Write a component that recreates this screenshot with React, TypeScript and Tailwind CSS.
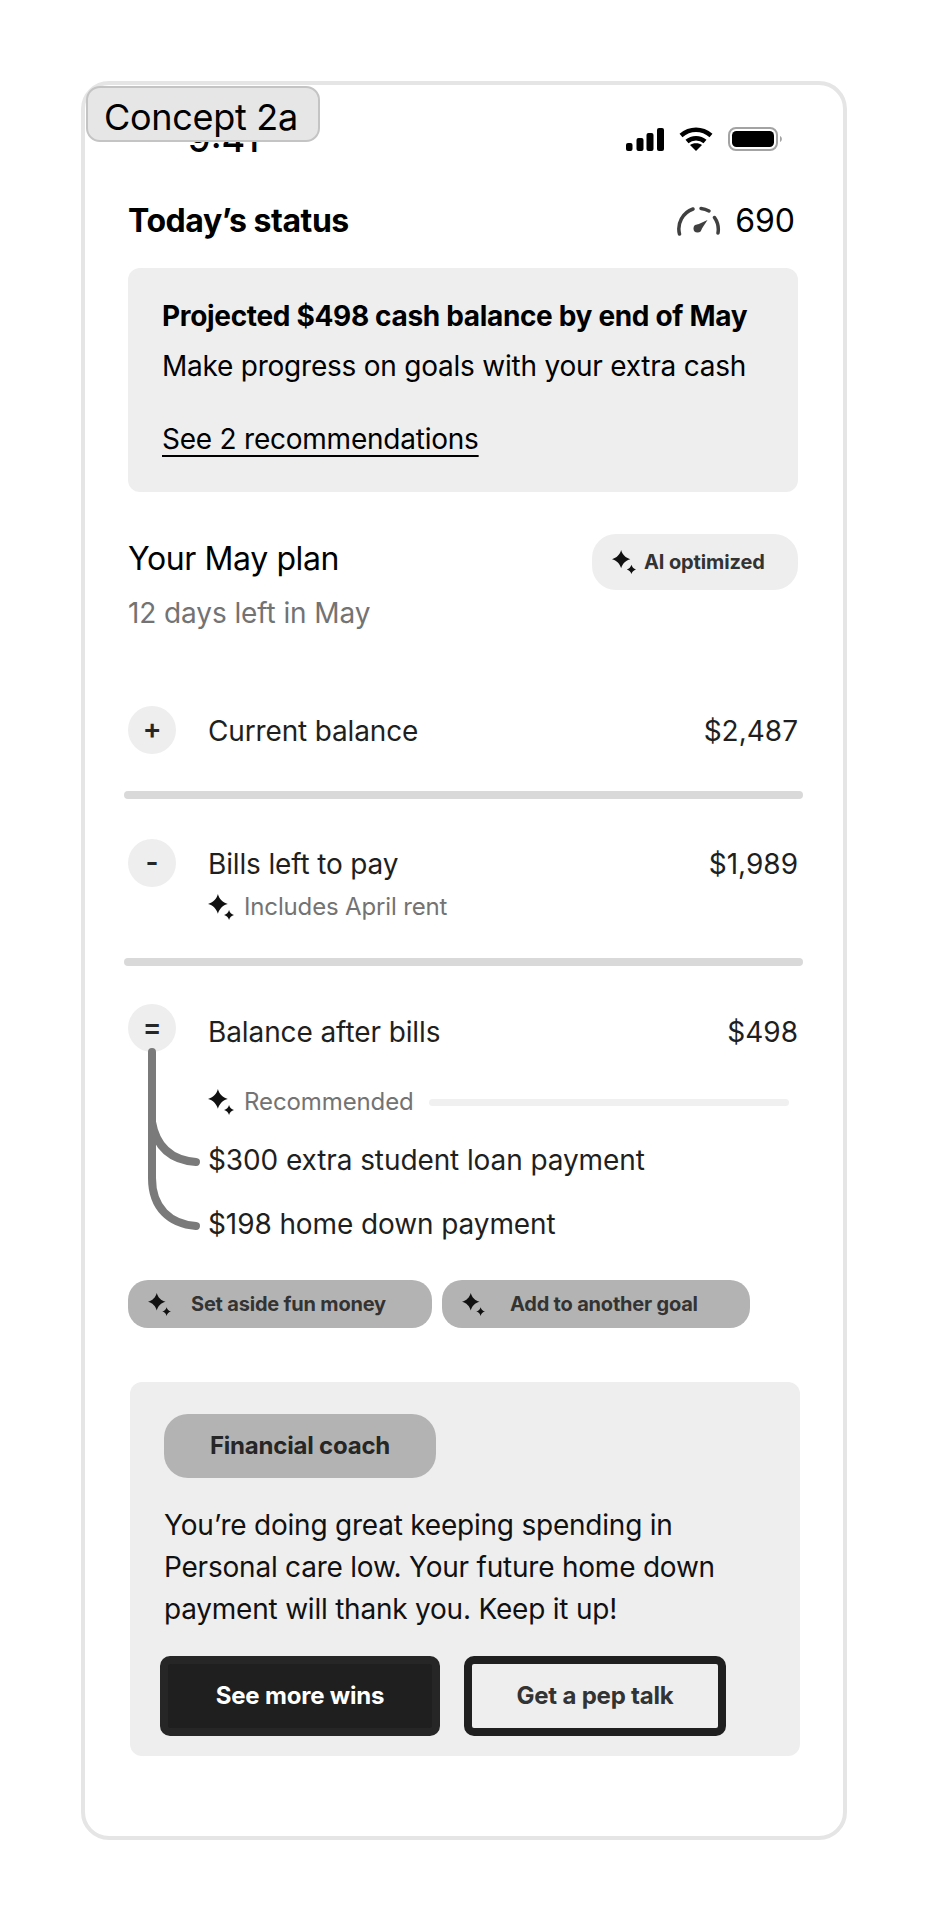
const Sparkle = ({ className }: { className: string }) => (
  <svg viewBox="0 0 21 21" className={className} fill="#111111">
    <path d="M8 0 C9 4 12 7 16 8 C12 9 9 12 8 16 C7 12 4 9 0 8 C4 7 7 4 8 0 Z" />
    <path d="M17 13 C17.5 15 19 16.5 21 17 C19 17.5 17.5 19 17 21 C16.5 19 15 17.5 13 17 C15 16.5 16.5 15 17 13 Z" />
  </svg>
);

const StatusIcons = () => (
  <div className="flex items-center gap-[15px]">
    <svg width="38" height="23" viewBox="0 0 38 23" fill="#000000">
      <rect x="0" y="15" width="6.5" height="8" rx="2" />
      <rect x="10.5" y="10" width="7" height="13" rx="2" />
      <rect x="20.5" y="5" width="7" height="18" rx="2" />
      <rect x="31" y="0" width="7" height="23" rx="2" />
    </svg>
    <svg width="34" height="24" viewBox="0 0 34 24" fill="none" stroke="#000000" strokeWidth="4.5">
      <path d="M2 8.5 C11 0.8 23 0.8 32 8.5" />
      <path d="M8 14.5 C13 10 21 10 26 14.5" />
      <path d="M17 24 L11 18 C14 15.5 20 15.5 23 18 Z" fill="#000000" stroke="none" />
    </svg>
    <svg width="55" height="24" viewBox="0 0 55 24">
      <rect x="1" y="1" width="48" height="22" rx="7" fill="none" stroke="#a3a3a3" strokeWidth="2" />
      <rect x="4" y="4" width="42" height="16" rx="4.5" fill="#000000" />
      <path d="M52 9 C54.5 10 54.5 14 52 15 Z" fill="#a3a3a3" />
    </svg>
  </div>
);

const Gauge = () => (
  <svg width="44" height="30" viewBox="12 10 44 30" fill="none" stroke="#404040" strokeWidth="3.5" strokeLinecap="round">
    <path d="M14.5 38 A 21 21 0 0 1 28 13" />
    <path d="M36 12.5 A 21 21 0 0 1 44 15" />
    <path d="M49.5 21.5 A 21 21 0 0 1 53 37" />
    <circle cx="32.5" cy="32.5" r="4" fill="#404040" stroke="none" />
    <path d="M29.5 30 L42.5 24 L35 35.5 Z" fill="#404040" stroke="none" />
  </svg>
);

const Circle = ({ sign }: { sign: string }) => (
  <div className="w-12 h-12 shrink-0 rounded-full bg-[#eeeeee] flex items-center justify-center pb-[2px] text-[28px] font-semibold text-[#262626]">
    {sign}
  </div>
);

const Divider = () => <div className="h-2 w-[679px] -ml-1 rounded-full bg-[#d9d9d9]" />;

const Chip = ({ label, width, gap }: { label: string; width: string; gap: string }) => (
  <div className={`h-12 ${width} ${gap} rounded-[20px] bg-[#b3b3b3] flex items-center pl-5 text-[20px] font-bold text-[#333333] tracking-[-0.2px]`}>
    <Sparkle className="w-[23px] h-[23px] shrink-0" />
    {label}
  </div>
);

export default function App() {
  return (
    <div className="bg-white min-h-[1920px] pt-[81px] pl-[81px] font-['Inter',sans-serif] text-[#1f1f1f]">
      <div className="relative w-[766px] h-[1759px] border-4 border-[#e5e5e5] rounded-[28px] pl-[43px] pr-[45px]">
        <div className="absolute left-[1px] top-[1px] w-[234px] h-[56px] z-10 rounded-[14px] bg-[#e6e6e6] border-2 border-[#c4c4c4] flex items-center pl-[16px] pt-[6px] text-[36px] tracking-[-0.3px] text-black">
          Concept 2a
        </div>

        {/* status bar */}
        <div className="h-[75px] flex justify-between items-start pr-[15px]">
          <div className="pt-[32px] pl-[60px] text-[36px] leading-[44px] font-medium text-black">9:41</div>
          <div className="pt-[42px]"><StatusIcons /></div>
        </div>

        <div className="mt-10 h-10 flex items-center justify-between">
          <div className="pt-[2px] text-[32px] font-bold text-black tracking-[-0.45px]">Today’s status</div>
          <div className="flex items-center gap-[14px] pt-[2px] pr-[3px] text-[32px] text-black">
            <Gauge />
            <span>690</span>
          </div>
        </div>

        <div className="mt-7 h-[224px] rounded-[12px] bg-[#eeeeee] pl-[34px] pt-7 text-[28px] text-black tracking-[-0.23px]">
          <div className="h-10 leading-10 font-bold tracking-[-0.33px]">Projected $498 cash balance by end of May</div>
          <div className="mt-[10px] h-10 leading-10">Make progress on goals with your extra cash</div>
          <div className="mt-[33px] h-10 leading-10 underline underline-offset-[6px]">See 2 recommendations</div>
        </div>

        <div className="mt-[42px] flex items-start justify-between">
          <div className="pt-[5px]">
            <div className="h-10 leading-10 text-[32px] text-black tracking-[-0.38px]">Your May plan</div>
            <div className="mt-[14px] h-10 leading-10 text-[28px] text-[#737373] tracking-[-0.1px]">12 days left in May</div>
          </div>
          <div className="w-[206px] h-14 rounded-[24px] bg-[#eeeeee] flex items-center gap-[8px] pl-[20px] text-[20px] font-bold text-[#333333] tracking-[-0.12px]">
            <Sparkle className="w-[24px] h-[24px] shrink-0" />
            AI optimized
          </div>
        </div>

        <div className="mt-[73px] flex items-center gap-8 text-[28px] tracking-[-0.15px]">
          <Circle sign="+" />
          <div className="flex-1 pt-[2px]">Current balance</div>
          <div className="pt-[2px] tracking-normal">$2,487</div>
        </div>

        <div className="mt-[37px]"><Divider /></div>

        <div className="mt-10 flex items-center gap-8 text-[28px] tracking-[-0.15px]">
          <Circle sign="-" />
          <div className="flex-1 pt-[2px]">Bills left to pay</div>
          <div className="pt-[2px] tracking-normal">$1,989</div>
        </div>
        <div className="mt-[5px] ml-20 h-[30px] flex items-center gap-[10px] text-[24px] text-[#737373] tracking-[-0.15px]">
          <Sparkle className="w-[26px] h-[26px]" />
          Includes April rent
        </div>

        <div className="mt-[36px]"><Divider /></div>

        <div className="relative mt-[38px]">
          <svg className="absolute left-[17px] top-[44px]" width="56" height="186" viewBox="0 0 56 186" fill="none" stroke="#7a7a7a" strokeWidth="8" strokeLinecap="round">
            <path d="M7 4 L7 130 C7 160 25 176 51 178" />
            <path d="M7 74 C11 98 25 112 51 114" />
          </svg>
          <div className="flex items-start gap-8 text-[28px] tracking-[-0.1px]">
            <Circle sign="=" />
            <div className="flex-1 mt-2 h-10 leading-10">Balance after bills</div>
            <div className="mt-2 h-10 leading-10 tracking-normal">$498</div>
          </div>
          <div className="mt-[35px] ml-20 h-[30px] flex items-center gap-[10px] text-[24px] text-[#737373] tracking-[-0.1px]">
            <Sparkle className="w-[26px] h-[26px]" />
            Recommended
            <div className="ml-[5px] w-[360px] h-[7px] rounded-full bg-[#f0f0f0]" />
          </div>
          <div className="mt-[23px] ml-20 h-10 leading-10 text-[28px] tracking-[-0.1px]">$300 extra student loan payment</div>
          <div className="mt-6 ml-20 h-10 leading-10 text-[28px] tracking-[-0.1px]">$198 home down payment</div>
        </div>

        <div className="mt-9 flex gap-[10px]">
          <Chip label="Set aside fun money" width="w-[304px]" gap="gap-[20px]" />
          <Chip label="Add to another goal" width="w-[308px]" gap="gap-[25px]" />
        </div>

        <div className="mt-[54px] ml-[2px] w-[670px] h-[374px] rounded-[12px] bg-[#eeeeee] pl-[34px] pt-[32px]">
          <div className="w-[272px] h-16 rounded-[24px] bg-[#b3b3b3] flex items-center justify-center text-[24px] font-bold text-[#262626] tracking-[-0.2px]">
            Financial coach
          </div>
          <div className="mt-[26px] text-[28px] leading-[42px] text-[#111111] tracking-[-0.22px]">
            You’re doing great keeping spending in<br />
            Personal care low. Your future home down<br />
            payment will thank you. Keep it up!
          </div>
          <div className="mt-[26px] -ml-1 flex gap-6">
            <div className="w-[280px] h-20 rounded-[10px] border-8 border-[#262626] bg-[#1f1f1f] flex items-center justify-center text-[24px] font-bold text-white tracking-[-0.2px]">
              See more wins
            </div>
            <div className="w-[262px] h-20 rounded-[10px] border-8 border-[#1f1f1f] flex items-center justify-center text-[24px] font-bold text-[#333333] tracking-[-0.2px]">
              Get a pep talk
            </div>
          </div>
        </div>
      </div>
    </div>
  );
}
